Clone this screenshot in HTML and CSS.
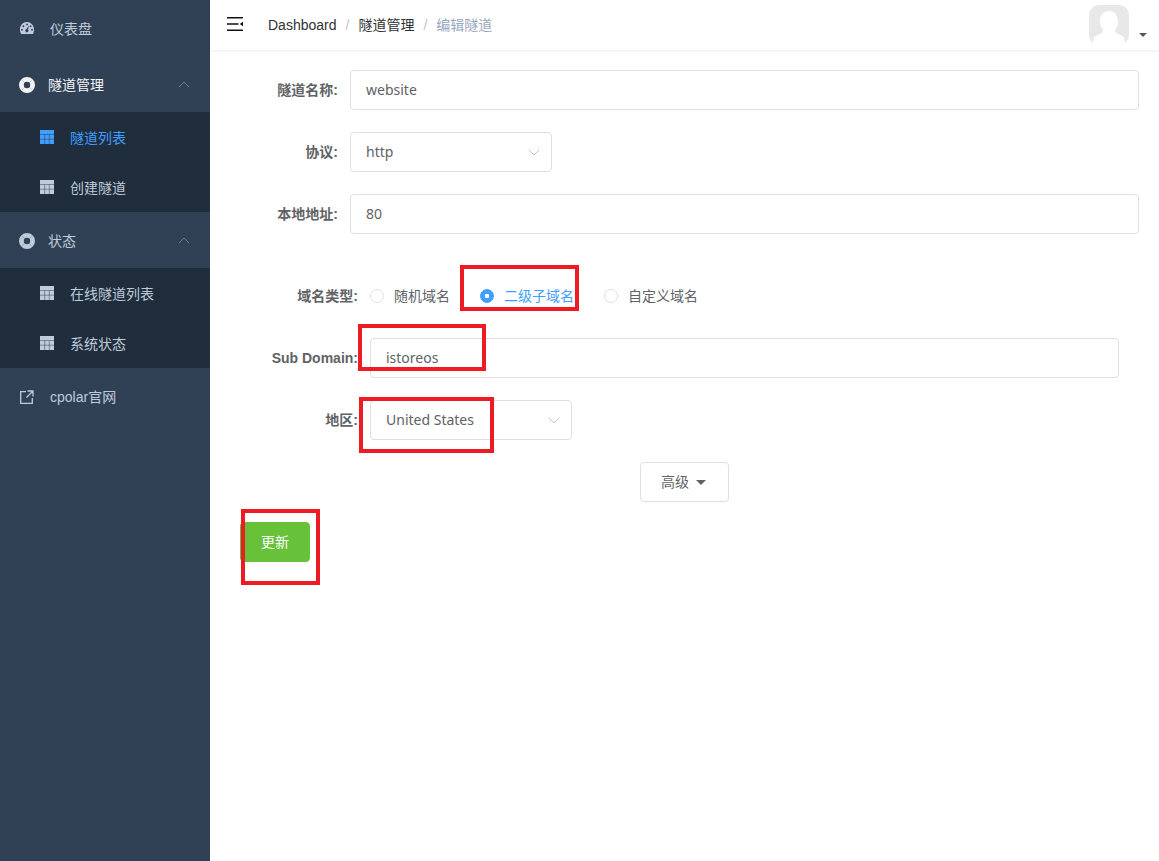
FILE: index.html
```html
<!DOCTYPE html>
<html lang="zh">
<head>
<meta charset="utf-8">
<title>编辑隧道</title>
<link rel="stylesheet" href="styles.css">
</head>
<body>
<svg class="defs" width="0" height="0" aria-hidden="true">
  <symbol id="table" viewBox="0 0 14 14">
    <path fill="currentColor" d="M0 0h14v14H0z"/>
    <path fill="none" stroke="#1f2d3d" stroke-opacity=".55" stroke-width=".8" d="M0 4.500h14M0 9.200h14M4.700 4.500V14M9.300 4.500V14"/>
  </symbol>
  <symbol id="buoy" viewBox="0 0 16 16">
    <path fill="currentColor" fill-rule="evenodd" d="M8 0a8 8 0 1 1 0 16A8 8 0 0 1 8 0zm0 4.800a3.200 3.200 0 1 0 0 6.400 3.200 3.200 0 0 0 0-6.400z"/>
    <path fill="none" stroke="#304156" stroke-opacity=".35" stroke-width=".7" d="M2.300 2.300l3.300 3.300M13.700 2.300l-3.300 3.300M2.300 13.700l3.300-3.300M13.700 13.700l-3.300-3.300"/>
  </symbol>
  <symbol id="chev" viewBox="0 0 12 7">
    <path fill="none" stroke="currentColor" stroke-width="1" d="M.8 6.200 6 1l5.200 5.200"/>
  </symbol>
  <symbol id="chev-down" viewBox="0 0 12 7">
    <path fill="none" stroke="currentColor" stroke-width="1" d="M.8.800 6 6l5.200-5.200"/>
  </symbol>
</svg>
<div class="app">
  <aside class="sidebar">
    <div class="menu-item">
      <svg class="ico-main ico-gauge" viewBox="0 0 14 11" preserveAspectRatio="none"><path fill="currentColor" fill-rule="evenodd" d="M7 0a7 7 0 0 1 7 7c0 1.500-.4 2.900-1.200 4H1.200A7 7 0 0 1 7 0zM7 1.300a.9.900 0 1 0 0 1.800.9.900 0 0 0 0-1.800zM3.400 2.900a.9.900 0 1 0 0 1.800.9.900 0 0 0 0-1.800zM10.600 2.900a.9.900 0 1 0 0 1.800.9.900 0 0 0 0-1.800zM2 6.200a.9.900 0 1 0 0 1.800.9.900 0 0 0 0-1.800zM12 6.200a.9.900 0 1 0 0 1.800.9.900 0 0 0 0-1.800zM8.900 3.300 6.500 6.500a1.500 1.500 0 1 0 1.600.6z"/></svg>
      <span class="menu-text">仪表盘</span>
    </div>
    <div class="menu-title is-open">
      <svg class="ico-buoy"><use href="#buoy"/></svg>
      <span>隧道管理</span>
      <svg class="ico-chev"><use href="#chev"/></svg>
    </div>
    <div class="submenu">
      <div class="sub-item is-active"><svg class="ico-table"><use href="#table"/></svg><span>隧道列表</span></div>
      <div class="sub-item"><svg class="ico-table"><use href="#table"/></svg><span>创建隧道</span></div>
    </div>
    <div class="menu-title">
      <svg class="ico-buoy"><use href="#buoy"/></svg>
      <span>状态</span>
      <svg class="ico-chev"><use href="#chev"/></svg>
    </div>
    <div class="submenu">
      <div class="sub-item"><svg class="ico-table"><use href="#table"/></svg><span>在线隧道列表</span></div>
      <div class="sub-item"><svg class="ico-table"><use href="#table"/></svg><span>系统状态</span></div>
    </div>
    <div class="menu-item">
      <svg class="ico-main ico-link" viewBox="0 0 14 14"><path fill="none" stroke="currentColor" stroke-width="1.300" d="M6 1.700H.7v11.600h11.600V8M7.500 1H13v5.500M13 1 6.500 7.500"/></svg>
      <span class="menu-text">cpolar官网</span>
    </div>
  </aside>
  <main class="main">
    <header class="navbar">
      <svg class="hamburger" viewBox="0 0 16 14"><path fill="#111" d="M0 0h16v1.600H0zM0 6.200h11.500v1.600H0zM0 12.400h16V14H0zM16 4.700v4.600L12.800 7z"/></svg>
      <nav class="crumbs">
        <span class="crumb">Dashboard</span><span class="sep">/</span>
        <span class="crumb">隧道管理</span><span class="sep">/</span>
        <span class="crumb-last">编辑隧道</span>
      </nav>
      <div class="user">
        <div class="avatar">
          <svg viewBox="0 0 40 40"><path fill="#fff" d="M20 6c5.500 0 9 4 9 10 0 3-.9 6-2.700 8.200-.4 2 .2 3.500 2.200 4.500 2.500 1.200 5 2 6.500 3.300L36 40H4l1-8c1.500-1.300 4-2.100 6.500-3.300 2-1 2.600-2.500 2.200-4.500C11.900 22 11 19 11 16c0-6 3.500-10 9-10z"/></svg>
        </div>
        <span class="user-caret"></span>
      </div>
    </header>
    <form class="form">
      <div class="field"><label class="label">隧道名称:</label><input class="input" value="website"></div>
      <div class="field"><label class="label">协议:</label>
        <div class="select"><span>http</span><svg class="select-arrow"><use href="#chev-down"/></svg></div>
      </div>
      <div class="field"><label class="label">本地地址:</label><input class="input" value="80"></div>
      <div class="nested">
        <div class="field"><label class="label">域名类型:</label>
          <div class="radios">
            <span class="radio"><i class="dot"></i>随机域名</span>
            <span class="radio is-checked"><i class="dot"></i>二级子域名</span>
            <span class="radio"><i class="dot"></i>自定义域名</span>
          </div>
        </div>
        <div class="field"><label class="label">Sub Domain:</label><input class="input" value="istoreos"></div>
        <div class="field"><label class="label">地区:</label>
          <div class="select"><span>United States</span><svg class="select-arrow"><use href="#chev-down"/></svg></div>
        </div>
      </div>
      <div class="advanced"><button type="button" class="btn">高级<i class="btn-caret"></i></button></div>
      <button type="button" class="btn-primary">更新</button>
    </form>
    <div class="mark mark-radio"></div>
    <div class="mark mark-sub"></div>
    <div class="mark mark-region"></div>
    <div class="mark mark-save"></div>
  </main>
</div>
</body>
</html>
```
FILE: styles.css
```css
* { box-sizing: border-box; }
html, body { margin: 0; height: 100%; }
body {
  font-family: "Liberation Sans", "Noto Sans CJK SC", sans-serif;
  font-size: 14px;
  line-height: 20px;
  color: #606266;
  background: #fff;
  overflow: hidden;
}
.defs { position: absolute; }
.app { display: flex; height: 861px; }

.sidebar { width: 210px; flex: none; background: #304156; color: #bfcbd9; }
.menu-item { height: 56px; display: flex; align-items: center; padding: 2px 0 0 20px; }
.menu-text { margin-left: 16px; }
.ico-main { width: 14px; height: 14px; }
.ico-gauge { height: 12px; margin-top: -2px; }
.menu-title { height: 56px; display: flex; align-items: center; padding: 2px 0 0 19px; position: relative; }
.menu-title.is-open { color: #f4f4f5; }
.menu-title span { margin-left: 13px; }
.ico-buoy { width: 16px; height: 16px; }
.ico-chev { position: absolute; left: 178px; top: 25px; width: 12px; height: 7px; color: #6c7a8b; }
.submenu { background: #1f2d3d; }
.sub-item { height: 50px; display: flex; align-items: center; padding-left: 40px; }
.sub-item span { margin: 2px 0 0 16px; }
.sub-item.is-active { color: #409eff; }
.ico-table { width: 14px; height: 14px; }

.main { flex: 1; min-width: 0; position: relative; }
.navbar {
  height: 50px;
  display: flex;
  align-items: center;
  padding-left: 17px;
  box-shadow: 0 1px 4px rgba(0, 21, 41, .08);
}
.hamburger { width: 16px; height: 14px; margin-top: -2px; }
.crumbs { margin-left: 25px; display: flex; align-items: center; }
.crumb { color: #303133; }
.crumb-last { color: #97a8be; }
.sep { color: #c0c4cc; margin: 0 9px; }
.user { margin-left: auto; margin-right: 12px; display: flex; position: relative; width: 58px; height: 40px; }
.avatar { width: 40px; height: 40px; border-radius: 10px; background: #e8e8e8; overflow: hidden; }
.avatar svg { display: block; width: 40px; height: 40px; }
.user-caret {
  position: absolute;
  left: 50px;
  top: 28px;
  border-style: solid;
  border-width: 4px 4px 0;
  border-color: #55585e transparent transparent;
}

.form { padding: 20px; }
.field { display: flex; margin-bottom: 22px; }
.label {
  width: 120px;
  flex: none;
  padding-right: 12px;
  text-align: right;
  line-height: 40px;
  font-weight: 700;
  white-space: nowrap;
}
.input {
  flex: 1;
  min-width: 0;
  height: 40px;
  padding: 0 15px 2px;
  border: 1px solid #dcdfe6;
  border-radius: 4px;
  font-family: "Noto Sans", "Noto Sans CJK SC", sans-serif;
  font-size: 14px;
  color: #606266;
  outline: none;
}
.select {
  width: 202px;
  height: 40px;
  padding: 0 15px;
  border: 1px solid #dcdfe6;
  border-radius: 4px;
  display: flex;
  align-items: center;
  justify-content: space-between;
  font-family: "Noto Sans", "Noto Sans CJK SC", sans-serif;
}
.select-arrow { width: 12px; height: 7px; color: #c0c4cc; margin-right: -4px; }
.nested { margin: 42px 20px 0; }
.radios { display: flex; align-items: center; height: 40px; }
.radio { display: flex; align-items: center; margin-right: 30px; }
.dot {
  width: 14px;
  height: 14px;
  margin-right: 10px;
  border: 1px solid #dcdfe6;
  border-radius: 50%;
  background: #fff;
}
.radio.is-checked { color: #409eff; }
.radio.is-checked .dot { background: radial-gradient(circle, #fff 0 2px, #409eff 2.5px); border-color: #409eff; }
.advanced { display: flex; justify-content: center; margin-bottom: 20px; }
.btn {
  height: 40px;
  padding: 0 20px;
  display: flex;
  align-items: center;
  background: #fff;
  border: 1px solid #dcdfe6;
  border-radius: 4px;
  font: inherit;
  color: #606266;
}
.btn-caret {
  margin-left: 7px;
  margin-right: 2px;
  border-style: solid;
  border-width: 5px 5px 0;
  border-color: #606266 transparent transparent;
}
.btn-primary {
  display: block;
  height: 40px;
  width: 70px;
  margin-left: 10px;
  background: #67c23a;
  border: 1px solid #67c23a;
  border-radius: 4px;
  font: inherit;
  color: #fff;
}

.mark { position: absolute; border: 4px solid #ed1c24; pointer-events: none; }
.mark-radio { left: 250px; top: 265px; width: 119px; height: 46px; }
.mark-sub { left: 148px; top: 324px; width: 128px; height: 47px; }
.mark-region { left: 149px; top: 397px; width: 135px; height: 56px; }
.mark-save { left: 31px; top: 509px; width: 79px; height: 76px; }
```
